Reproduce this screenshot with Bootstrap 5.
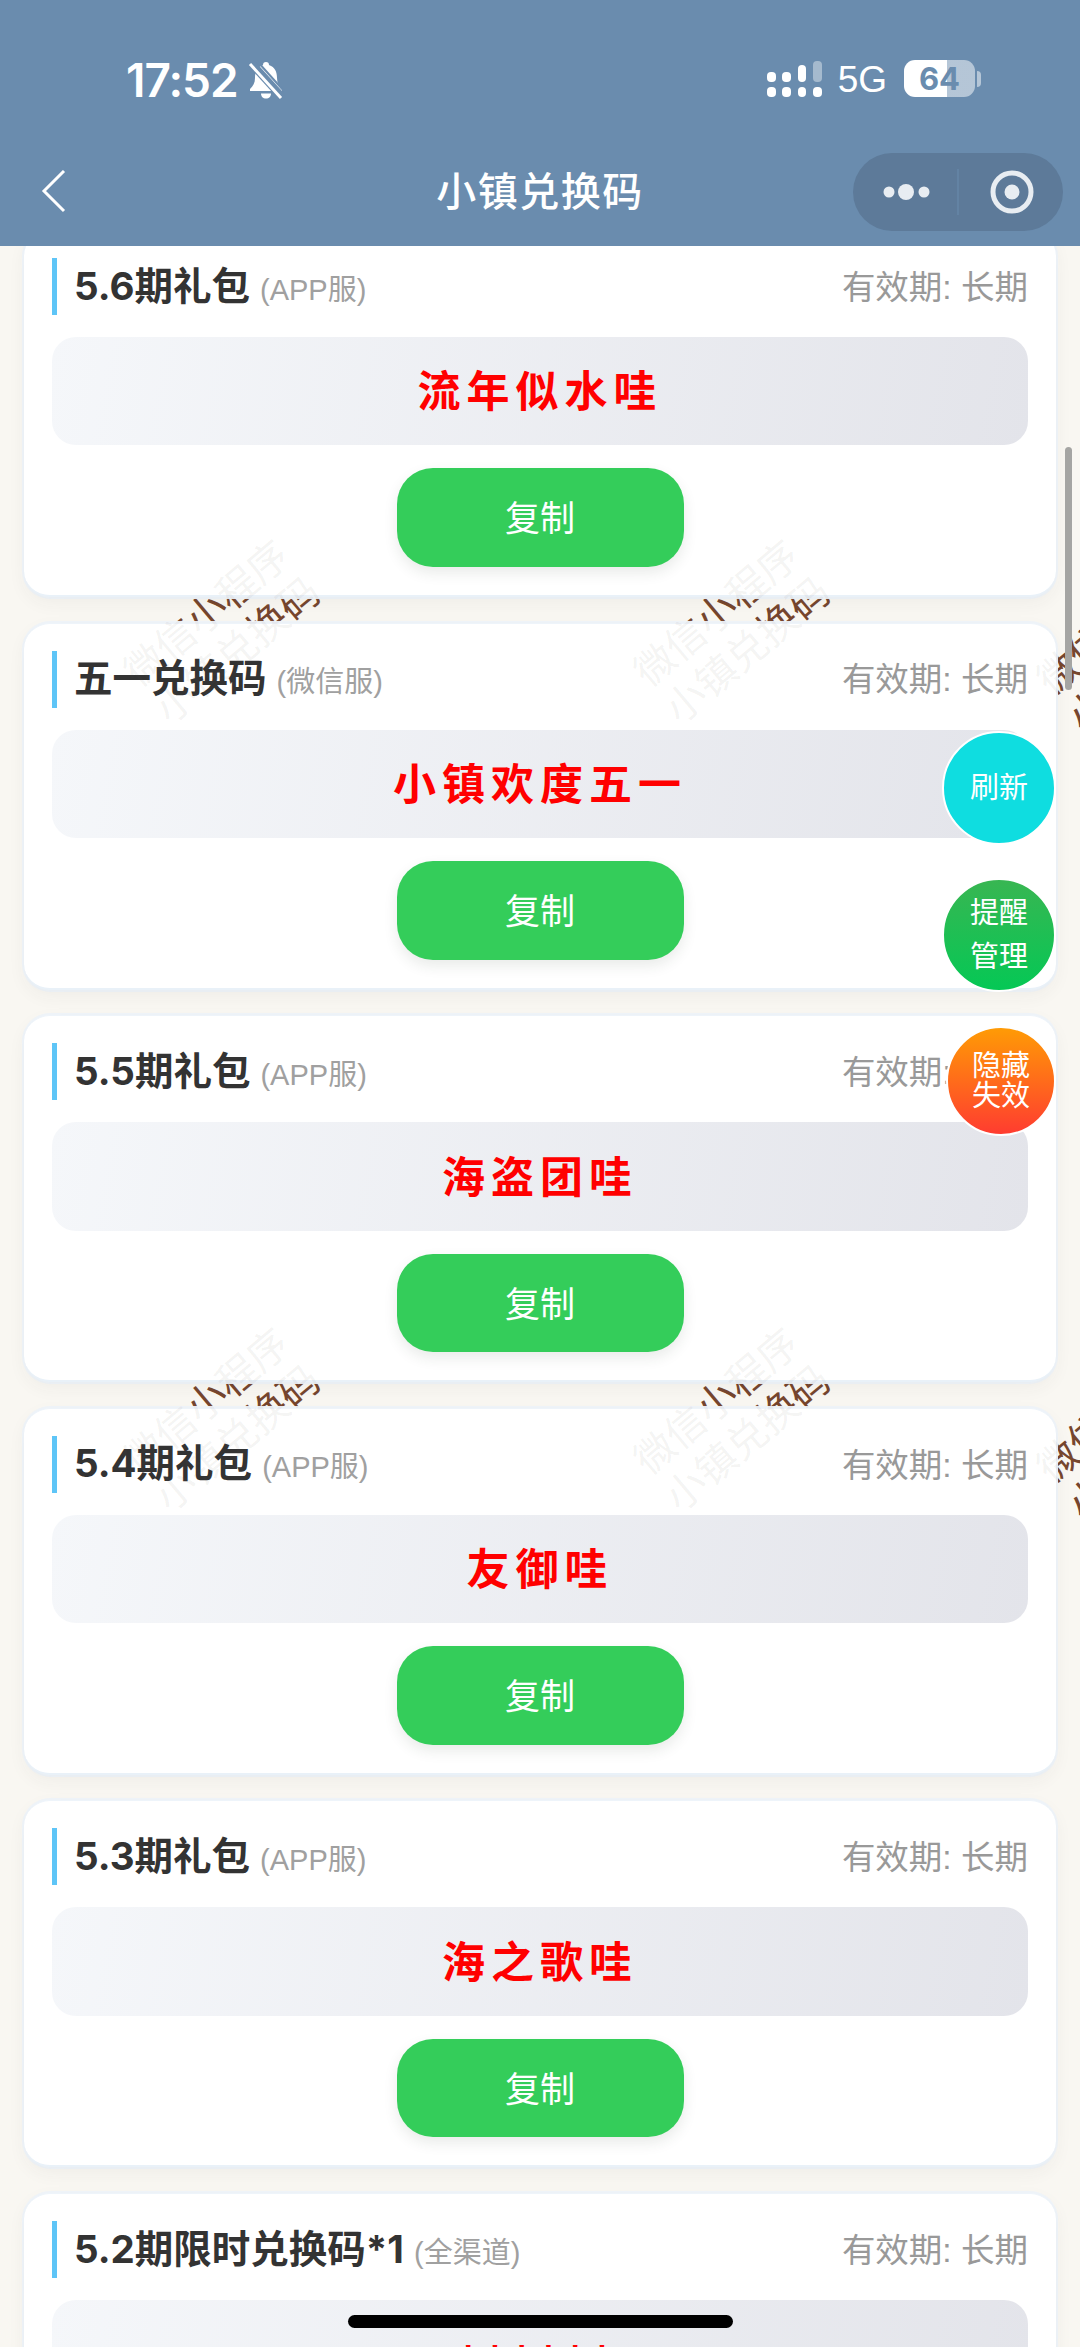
<!DOCTYPE html>
<html lang="zh-CN">
<head>
  <meta charset="UTF-8">
  <title>小镇兑换码</title>
  <link href="https://cdn.jsdelivr.net/npm/bootstrap@5.3.0/dist/css/bootstrap.min.css" rel="stylesheet">
  <style>
    html, body {
      height: 2347px;
      overflow: hidden;
    }
    body {
      background-color: #f9f7f2;
      font-family: "Liberation Sans", "Noto Sans CJK SC", sans-serif;
    }
    .app-root {
      position: relative;
      height: 2347px;
      overflow: hidden;
    }

    /* top bars */
    .top-head {
      position: relative;
      z-index: 3;
      height: 246px;
      background-color: #6a8cae;
      color: #fff;
    }
    .status-row {
      height: 153px;
      padding: 60px 105px 0 126px;
    }
    .clock-text {
      font-family: Inter, "Liberation Sans", sans-serif;
      font-size: 46px;
      font-weight: 600;
      line-height: 40px;
      letter-spacing: -1px;
    }
    .bell-icon {
      margin-left: 9px;
    }
    .net-text {
      font-family: "Liberation Sans", sans-serif;
      font-size: 37px;
      line-height: 40px;
      margin: 0 17px 0 15px;
    }
    .batt-box {
      position: relative;
      width: 71px;
      height: 37px;
      border-radius: 11px;
      background: linear-gradient(90deg, #fff 60%, rgba(255, 255, 255, .5) 60%);
      color: #6a8cae;
      font-family: Inter, "Liberation Sans", sans-serif;
      font-size: 31px;
      font-weight: 700;
      line-height: 37px;
      text-align: center;
    }
    .batt-box::after {
      content: "";
      position: absolute;
      right: -6px;
      top: 11px;
      width: 4px;
      height: 16px;
      border-radius: 0 4px 4px 0;
      background-color: rgba(255, 255, 255, .5);
    }
    .nav-row {
      display: grid;
      grid-template-columns: 1fr auto 1fr;
      height: 93px;
    }
    .back-icon {
      margin: 17px 0 0 27px;
    }
    .nav-title {
      font-size: 40px;
      font-weight: 500;
      line-height: 78px;
      letter-spacing: 1.500px;
    }
    .capsule-box {
      width: 210px;
      height: 78px;
      margin-right: 17px;
      border-radius: 39px;
      background-color: #5d7a99;
    }
    .capsule-box svg {
      display: block;
    }

    /* cards */
    .code-list {
      position: relative;
      z-index: 1;
      margin: -16px 24px 0;
    }
    .code-card {
      height: 367px;
      margin-bottom: 25.6px;
      padding: 27px 28px 28px;
      border: 0;
      border-bottom: 2px solid #e9f1f8;
      border-top: 1px solid #eef4fa;
      border-radius: 26px;
      background-color: #fff;
      box-shadow: 0 6px 18px rgba(60, 60, 50, .05), 0 0 0 2px #f0f5fa;
    }
    .title-row {
      height: 57px;
      margin-bottom: 22px;
      border-left: 5px solid #5ec5f7;
      padding-left: 17px;
    }
    .title-main {
      color: #333;
      font-family: Inter, "Noto Sans CJK SC", sans-serif;
      font-size: 38.500px;
      font-weight: 700;
    }
    .title-sub {
      margin-left: 10px;
      color: #a0a0a0;
      font-size: 29px;
    }
    .valid-text {
      margin-top: 3px;
      color: #999;
      font-size: 33.500px;
    }
    .code-box {
      height: 110px;
      margin-bottom: 23px;
      padding-top: 3px;
      border-radius: 24px;
      background: linear-gradient(100deg, #f5f7fa, #e3e4ea);
      color: #f00;
      font-size: 43px;
      font-weight: 700;
      letter-spacing: 6px;
    }
    .code-stars {
      padding-top: 10px;
      letter-spacing: 10px;
    }
    .copy-btn {
      display: block;
      width: 287px;
      height: 100px;
      margin: 0 auto;
      padding-top: 10px;
      border: 0;
      border-radius: 36px;
      background-color: #34cd5a;
      box-shadow: 0 6px 14px rgba(40, 60, 40, .1);
      color: #fff;
      font-size: 35px;
    }

    /* diagonal watermarks */
    .wm-layer {
      position: absolute;
      inset: 0;
      pointer-events: none;
    }
    .wm-back {
      z-index: 0;
      color: #77452c;
    }
    .wm-front {
      z-index: 2;
      color: rgba(110, 95, 90, .08);
    }
    .wm-item {
      position: absolute;
      width: 260px;
      font-size: 40px;
      line-height: 48px;
      text-align: center;
      white-space: nowrap;
      transform: translate(-50%, -50%) rotate(-40deg);
    }

    /* floating buttons */
    .float-btn {
      position: absolute;
      z-index: 4;
      right: 24px;
      width: 114px;
      height: 114px;
      border: 2px solid #fff;
      border-radius: 50%;
      color: #fff;
      font-size: 29px;
      line-height: 44px;
      text-align: center;
    }
    .float-refresh {
      top: 731px;
      background-color: #0fdde0;
    }
    .float-remind {
      top: 878px;
      background: linear-gradient(180deg, #38b652, #05c855);
    }
    .float-hide {
      top: 1026px;
      width: 110px;
      height: 110px;
      background: linear-gradient(180deg, #ff9b05, #ff3c30);
      line-height: 30px;
    }
    .scroll-thumb {
      position: absolute;
      z-index: 2;
      left: 1065px;
      top: 447px;
      width: 7px;
      height: 243px;
      border-radius: 4px;
      background-color: #a5a5a3;
    }
    .home-bar {
      position: absolute;
      z-index: 5;
      left: 348px;
      top: 2315px;
      width: 385px;
      height: 13px;
      border-radius: 7px;
      background-color: #000;
    }
  </style>
</head>
<body>
  <div class="app-root">
    <div class="wm-layer wm-back" id="wmBack"></div>

    <header class="top-head">
      <div class="status-row d-flex justify-content-between align-items-start">
        <div class="d-flex align-items-start">
          <span class="clock-text">17:52</span>
          <svg class="bell-icon" width="38" height="40" viewBox="0 0 38 40">
            <path d="M19 2c-2 0-3 1.300-3 3C10 7 8 12 8 18c0 5-2 8-5 11v2h32v-2c-3-3-5-6-5-11 0-6-2-11-8-13 0-1.700-1-3-3-3z" fill="#fff"/>
            <path d="M14 33.500h10c0 3-2 5-5 5s-5-2-5-5z" fill="#fff"/>
            <path d="M4 3l31 34" stroke="#6a8cae" stroke-width="8"/>
            <path d="M3 4l31 34" stroke="#fff" stroke-width="3"/>
            <path d="M10 1l27 30" stroke="#6a8cae" stroke-width="2"/>
          </svg>
        </div>
        <div class="d-flex align-items-start">
          <svg width="56" height="37" viewBox="0 0 56 37">
            <g fill="#fff">
              <rect x="0" y="12" width="9" height="10" rx="4"/>
              <rect x="0" y="27" width="9" height="10" rx="4"/>
              <rect x="15" y="12" width="9" height="10" rx="4"/>
              <rect x="15" y="27" width="9" height="10" rx="4"/>
              <rect x="31" y="5" width="8" height="17" rx="4"/>
              <rect x="31" y="27" width="8" height="10" rx="4"/>
              <rect x="46" y="27" width="9" height="10" rx="4"/>
            </g>
            <rect x="46" y="1" width="9" height="21" rx="4" fill="#fff" opacity=".4"/>
          </svg>
          <span class="net-text">5G</span>
          <div class="batt-box">64</div>
        </div>
      </div>
      <div class="nav-row">
        <div class="d-flex">
          <svg class="back-icon" width="44" height="44" viewBox="0 0 44 44">
            <path d="M37 1L17 21l20 20" fill="none" stroke="#fff" stroke-width="3"/>
          </svg>
        </div>
        <div class="nav-title">小镇兑换码</div>
        <div class="d-flex justify-content-end">
          <div class="capsule-box">
            <svg width="210" height="78" viewBox="0 0 210 78">
              <g fill="#e8edf2">
                <circle cx="36" cy="39" r="5.500"/>
                <circle cx="53" cy="39" r="8"/>
                <circle cx="71" cy="39" r="5.500"/>
              </g>
              <path d="M105 16v46" stroke="#6a8cae" stroke-width="1"/>
              <circle cx="159" cy="39" r="19" fill="none" stroke="#e8edf2" stroke-width="5"/>
              <circle cx="159" cy="39" r="7.500" fill="#e8edf2"/>
            </svg>
          </div>
        </div>
      </div>
    </header>

    <main class="code-list" id="codeList"></main>

    <div class="wm-layer wm-front" id="wmFront"></div>

    <div class="scroll-thumb"></div>
    <div class="float-btn float-refresh d-flex align-items-center justify-content-center">刷新</div>
    <div class="float-btn float-remind d-flex align-items-center justify-content-center"><span>提醒<br>管理</span></div>
    <div class="float-btn float-hide d-flex align-items-center justify-content-center"><span>隐藏<br>失效</span></div>
    <div class="home-bar"></div>
  </div>

  <script src="https://cdn.jsdelivr.net/npm/bootstrap@5.3.0/dist/js/bootstrap.bundle.min.js"></script>
  <script>
    const codes = [
      { title: '5.6期礼包', sub: '(APP服)', code: '流年似水哇' },
      { title: '五一兑换码', sub: '(微信服)', code: '小镇欢度五一' },
      { title: '5.5期礼包', sub: '(APP服)', code: '海盗团哇' },
      { title: '5.4期礼包', sub: '(APP服)', code: '友御哇' },
      { title: '5.3期礼包', sub: '(APP服)', code: '海之歌哇' },
      { title: '5.2期限时兑换码*1', sub: '(全渠道)', code: '******', extra: 'code-stars' }
    ];

    document.getElementById('codeList').innerHTML = codes.map(item => `
      <div class="card code-card">
        <div class="title-row d-flex justify-content-between align-items-center">
          <div><span class="title-main">${item.title}</span><span class="title-sub">${item.sub}</span></div>
          <span class="valid-text">有效期: 长期</span>
        </div>
        <div class="code-box d-flex align-items-center justify-content-center ${item.extra || ''}">${item.code}</div>
        <button class="btn copy-btn" type="button">复制</button>
      </div>`).join('');

    // watermark centres, read off the screenshot
    const marks = [[222, 632], [732, 632], [1135, 640], [222, 1420], [732, 1420], [1135, 1428]];
    const markHtml = marks.map(m =>
      `<div class="wm-item" style="left:${m[0]}px;top:${m[1]}px">微信小程序<br>小镇兑换码</div>`).join('');
    document.getElementById('wmBack').innerHTML = markHtml;
    document.getElementById('wmFront').innerHTML = markHtml;
  </script>
</body>
</html>
